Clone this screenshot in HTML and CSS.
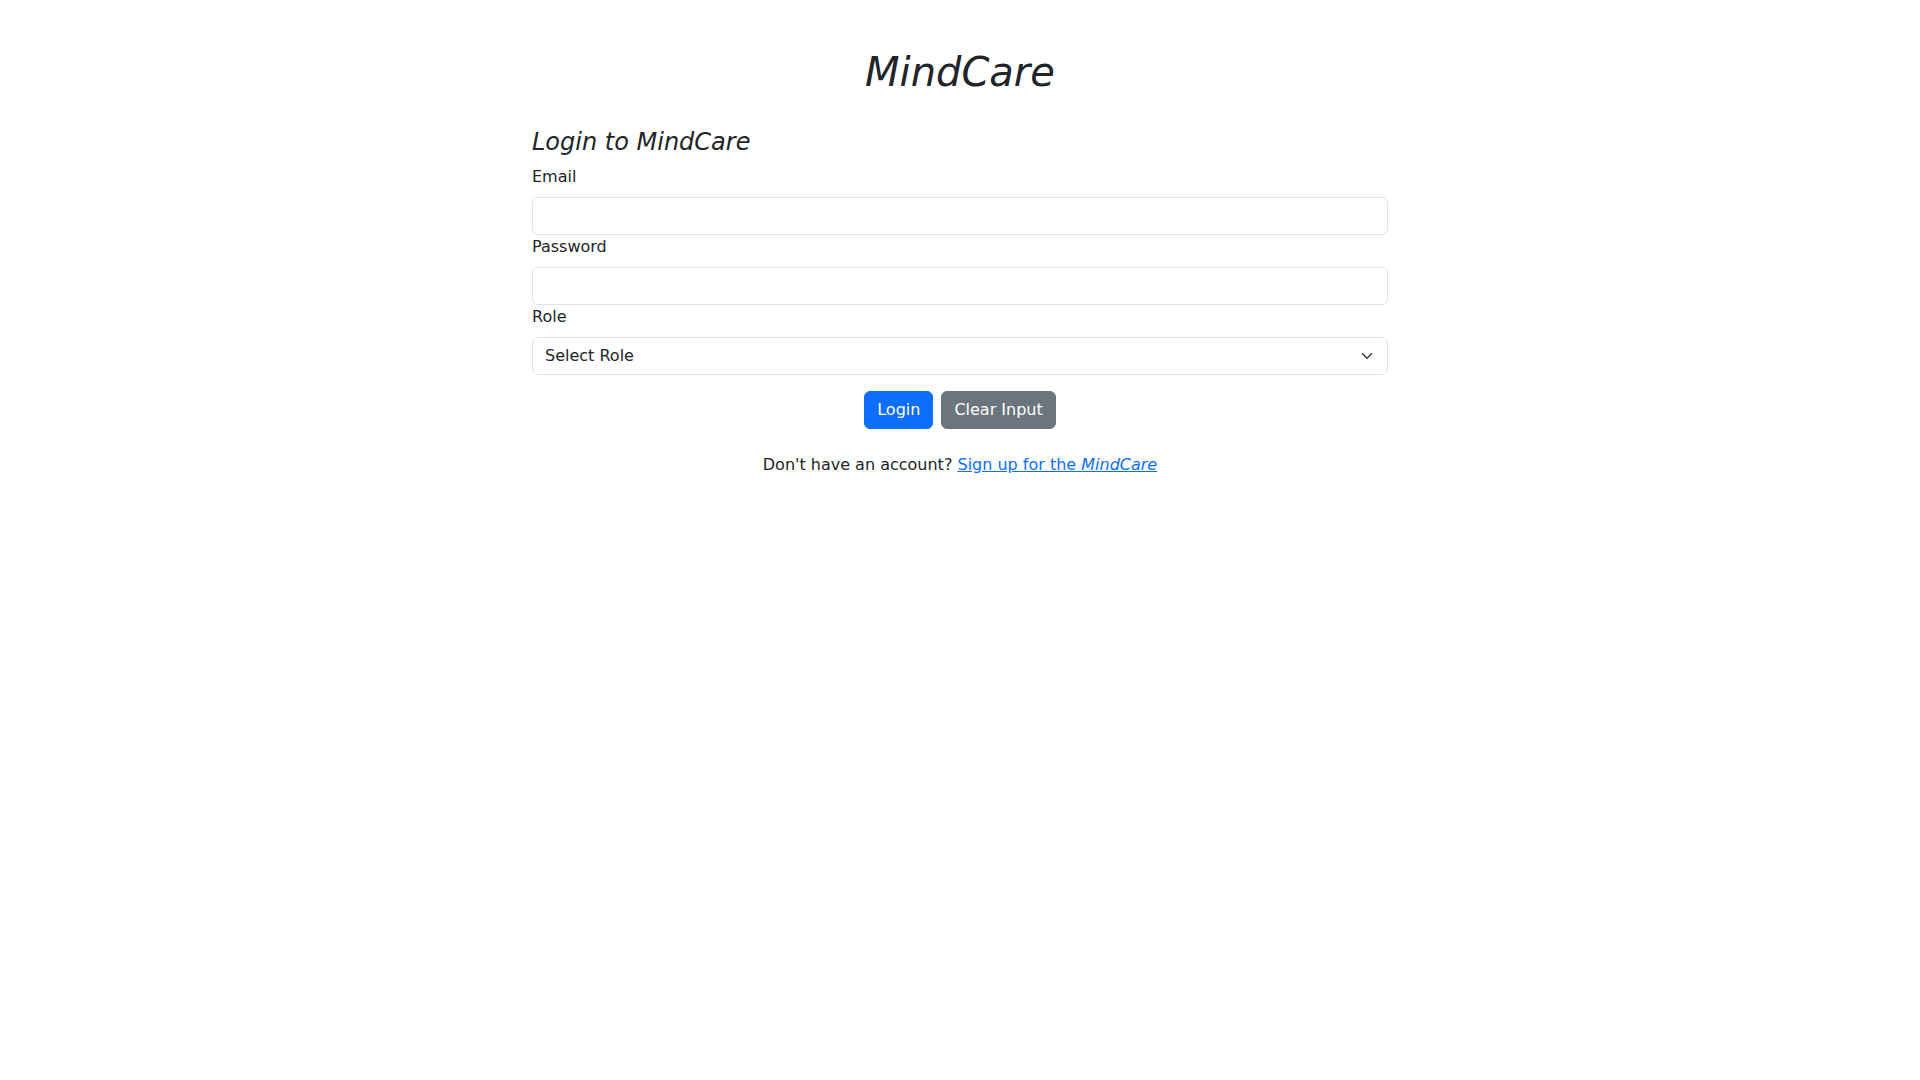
FILE: index.html
```html
<!DOCTYPE html>
<html lang="en">
<head>
	<meta charset="UTF-8">
	<title>MindCare - Login</title>
	<link rel="stylesheet" href="styles.css">
</head>
<body>
<div class="page">
	<h1 class="brand"><em>MindCare</em></h1>

	<h4 class="form-title"><em>Login to MindCare</em></h4>
	<form class="login-form" onsubmit="return false;">
		<div class="field">
			<label for="email">Email</label>
			<input type="email" id="email" class="form-control">
		</div>
		<div class="field">
			<label for="password">Password</label>
			<input type="password" id="password" class="form-control">
		</div>
		<div class="field">
			<label for="role">Role</label>
			<div class="select-wrap">
				<select id="role" class="form-select">
					<option value="">Select Role</option>
					<option value="patient">Patient</option>
					<option value="doctor">Doctor</option>
				</select>
				<!-- chevron -->
				<svg class="chevron" width="16" height="12" viewBox="0 0 16 16"><path fill="none" stroke="#343a40" stroke-linecap="round" stroke-linejoin="round" stroke-width="2" d="m2 5 6 6 6-6"/></svg>
			</div>
		</div>
		<div class="actions">
			<button type="submit" class="btn btn-primary">Login</button>
			<button type="reset" class="btn btn-secondary">Clear Input</button>
		</div>
	</form>

	<p class="signup">Don't have an account? <a href="#">Sign up for the <em>MindCare</em></a></p>
</div>
</body>
</html>
```

FILE: styles.css
```css
*{box-sizing: border-box;}
body{
	margin: 0;
	font-family: "DejaVu Sans", "Noto Sans", sans-serif;
	font-size: 16px;
	line-height: 1.5;
	color: #212529;
	background: #fff;
}
.page{
	width: 856px;
	margin: 0 auto;
	padding-top: 48px;
}
.brand{
	margin: 0 0 32px;
	font-size: 40px;
	font-weight: 500;
	line-height: 1.2;
	text-align: center;
}
.form-title{
	margin: 0 0 8px;
	font-size: 24px;
	font-weight: 500;
	line-height: 1.2;
}
.field label{display: inline-block;margin-bottom: 8px;}
.form-control,.form-select{
	display: block;
	width: 100%;
	height: 38px;
	padding: 6px 12px;
	font: inherit;
	color: #212529;
	background: #fff;
	border: 1px solid #dee2e6;
	border-radius: 6px;
	outline: none;
}
.form-select{
	appearance: none;
	-webkit-appearance: none;
	padding-right: 36px;
}
.select-wrap{position: relative;}
.chevron{
	position: absolute;
	right: 13px;
	top: 13px;
	pointer-events: none;
}
.actions{
	display: flex;
	justify-content: center;
	gap: 8px;
	margin-top: 16px;
}
.btn{
	padding: 6px 12px;
	font: inherit;
	line-height: 24px;
	color: #fff;
	border: 1px solid transparent;
	border-radius: 6px;
	cursor: pointer;
}
.btn-primary{background: #0d6efd;border-color: #0d6efd;}
.btn-secondary{background: #6c757d;border-color: #6c757d;}
.signup{
	margin: 24px 0 0;
	text-align: center;
}
.signup a{color: #0d6efd;}
```
